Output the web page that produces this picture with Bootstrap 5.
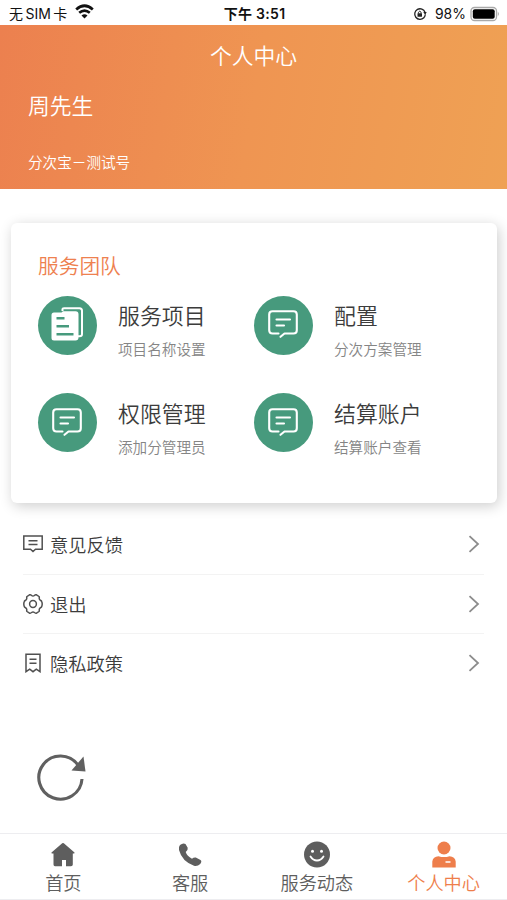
<!DOCTYPE html>
<html lang="zh-CN">
<head>
<meta charset="utf-8">
<meta name="viewport" content="width=device-width, initial-scale=1">
<title>个人中心</title>
<link href="https://cdn.jsdelivr.net/npm/bootstrap@5.3.0/dist/css/bootstrap.min.css" rel="stylesheet">
<style>
  body { font-family: "Noto Sans CJK SC", sans-serif; font-weight: 350; color: #3c3c3c; background: #fff; }
  svg { display: block; flex: none; }
  .screen { height: 900px; }
  .status { height: 25px; font-family: Inter, "Noto Sans CJK SC", sans-serif; font-size: 14px; font-weight: 400; line-height: 23px; color: #111; padding: 2px 7px 0 9px; }
  .clock { letter-spacing: .3px; }
  .carrier { word-spacing: -1.500px; }
  .hero { height: 164px; background: linear-gradient(100deg, #ec804f 0%, #ef9552 50%, #efa154 100%); padding: 15px 28px 0; }
  .hero-title { font-size: 21.8px; line-height: 30px; }
  .hero-name { font-size: 21.8px; line-height: 30px; margin-top: 20px; }
  .hero-org { font-size: 14.6px; line-height: 20px; margin-top: 32px; }
  .team { height: 280px; margin: 34px 10px 0 11px; padding: 27px 0 0 27px; border-radius: 6px; box-shadow: 2px 3px 14px rgba(0,0,0,.2); }
  .team-title { font-size: 20.7px; line-height: 30px; color: #ee8150; margin-bottom: 15.500px; }
  .tile { width: 216px; height: 97.600px; }
  .disc { width: 59px; height: 59px; background: #479a7d; margin-right: 21px; flex: none; }
  .disc svg { margin-bottom: 2px; }
  .disc .bubble { margin-right: 1px; }
  .tile-name { font-size: 21.9px; line-height: 30px; margin-top: 4.500px; }
  .tile-note { font-size: 14.6px; line-height: 20px; margin-top: 9px; color: #858585; }
  .menu { margin: 12px 23px 0; }
  .menu-row { height: 60px; padding-bottom: 1px; font-size: 18.3px; line-height: 28px; border-bottom: 1px solid #f3f3f3; }
  .menu-row + .menu-row { height: 59px; padding-bottom: 0; }
  .menu-row:last-child { border-bottom: 0; padding-bottom: 2px !important; }
  .menu-row svg:first-child { margin-right: 7px; }
  .reload { margin: 55.500px 0 0 36px; }
  .tabs { height: 67px; border-top: 1px solid #ededf0; border-bottom: 1px solid #ededf0; font-size: 18.2px; line-height: 26px; color: #5e5e5e; padding-top: 7px; }
  .tabs .on { color: #ee7e4b; }
</style>
<script src="https://cdn.jsdelivr.net/npm/bootstrap@5.3.0/dist/js/bootstrap.bundle.min.js"></script>
</head>
<body>
<svg width="0" height="0" class="position-absolute">
  <symbol id="bubble" viewBox="0 0 30 28">
    <path d="M10.500 23.500H4.500Q1.200 23.500 1.200 20.200V4.500Q1.200 1.200 4.500 1.200H25.500Q28.800 1.200 28.800 4.500V20.200Q28.800 23.500 25.500 23.500H16.500L12.500 26.800M8.500 9.500H22M8.500 15.500H16" fill="none" stroke="#fff" stroke-width="2.100" stroke-linecap="round" stroke-linejoin="round"/>
  </symbol>
  <symbol id="arrow" viewBox="0 0 12 18"><path d="M1.500 1.200L10 9L1.500 16.800" fill="none" stroke="#8c8c8c" stroke-width="1.800"/></symbol>
</svg>

<div class="screen d-flex flex-column overflow-hidden">
  <div class="status row g-0 align-items-center">
    <div class="col d-flex align-items-center">
      <span class="carrier">无 SIM 卡</span>
      <svg class="ms-2 mb-1" width="19" height="15" viewBox="0 0 19 15" fill="none" stroke="#111" stroke-width="2.700">
        <path d="M1.200 5.500Q9.500 -2 17.800 5.500M4.200 8.800Q9.500 4.300 14.800 8.800"/><path d="M6.500 11.400Q9.500 9 12.500 11.400L9.500 14.400Z" fill="#111" stroke="none"/>
      </svg>
    </div>
    <div class="clock col-auto fw-semibold">下午 3:51</div>
    <div class="col d-flex align-items-center justify-content-end">
      <svg width="14" height="14" viewBox="0 0 14 14" fill="none" stroke="#222">
        <path d="M10.800 10.800A5.300 5.300 0 1 1 12 5.200" stroke-width="1.300"/><path d="M12.300 7.500A5.300 5.300 0 0 1 10.500 11" stroke-width="1.300"/><path d="M10.300 5H13.700L12.200 8Z" fill="#222" stroke="none"/>
        <rect x="4.500" y="6.200" width="4.500" height="3.600" rx=".5" fill="#222" stroke="none"/><path d="M5.400 6.500V5.300Q6.750 3 8.100 5.300V6.500"/>
      </svg>
      <span class="mx-1 ps-1">98%</span>
      <svg width="30" height="16" viewBox="0 0 30 16">
        <rect x="1" y="1.500" width="25.500" height="13" rx="3.500" fill="#fff" stroke="#a9a9a9" stroke-width="1.300"/><rect x="2.800" y="3.200" width="21.900" height="9.600" rx="2" fill="#000"/><path d="M27.800 5.800Q30 8 27.800 10.200Z" fill="#a9a9a9"/>
      </svg>
    </div>
  </div>

  <header class="hero text-white">
    <div class="hero-title text-center">个人中心</div>
    <div class="hero-name">周先生</div>
    <div class="hero-org">分次宝－测试号</div>
  </header>

  <section class="team bg-white">
    <div class="team-title">服务团队</div>
    <div class="d-flex flex-wrap">
      <div class="tile d-flex">
        <div class="disc rounded-circle d-flex align-items-center justify-content-center">
          <svg width="33" height="34" viewBox="0 0 33 34"><path d="M11.500 4V2Q11.500 1.200 13 1.200H28.500Q31 1.200 31 3.700V27Q31 29.300 28.500 29.300H26" fill="none" stroke="#fff" stroke-width="2"/><path d="M3 5.500H10.500L12 4.300H24.500Q27.500 4.300 27.500 7.300V30.500Q27.500 33.500 24.500 33.500H3Q.5 33.500 .5 31V8Q.5 5.500 3 5.500Z" fill="#fff"/><path d="M5.500 11.300H13.500M5.500 19.200H18M5.500 27.200H22.500" stroke="#479a7d" stroke-width="2.500"/><path d="M29.200 4V27.500" stroke="#479a7d" stroke-width="1.200"/></svg>
        </div>
        <div><div class="tile-name">服务项目</div><div class="tile-note">项目名称设置</div></div>
      </div>
      <div class="tile d-flex">
        <div class="disc rounded-circle d-flex align-items-center justify-content-center"><svg class="bubble" width="30" height="28"><use href="#bubble"/></svg></div>
        <div><div class="tile-name">配置</div><div class="tile-note">分次方案管理</div></div>
      </div>
      <div class="tile d-flex">
        <div class="disc rounded-circle d-flex align-items-center justify-content-center"><svg class="bubble" width="30" height="28"><use href="#bubble"/></svg></div>
        <div><div class="tile-name">权限管理</div><div class="tile-note">添加分管理员</div></div>
      </div>
      <div class="tile d-flex">
        <div class="disc rounded-circle d-flex align-items-center justify-content-center"><svg class="bubble" width="30" height="28"><use href="#bubble"/></svg></div>
        <div><div class="tile-name">结算账户</div><div class="tile-note">结算账户查看</div></div>
      </div>
    </div>
  </section>

  <div class="menu">
    <div class="menu-row d-flex align-items-center">
      <svg width="20" height="20" viewBox="0 0 20 20" fill="none" stroke="#505050" stroke-width="1.500"><path d="M.8 2H19.200V15.300H12.500L10 17.600L7.500 15.300H.8ZM5.500 6.700H14.500M5.500 10.500H14.500"/></svg>
      <span>意见反馈</span><svg class="ms-auto me-1" width="12" height="18"><use href="#arrow"/></svg>
    </div>
    <div class="menu-row d-flex align-items-center">
      <svg width="20" height="20" viewBox="0 0 20 20" fill="none" stroke="#505050" stroke-width="1.500" stroke-linejoin="round"><path d="M6.500 .8Q8 .6 8.500 1.500Q10 2.500 11.500 1.500Q12 .6 13.500 .8L16 2.500Q16.500 3.300 16.200 4.200Q16.200 5.800 17.800 6.500Q18.600 7 18.800 7.800Q19.600 10 18.800 12.200Q18.600 13 17.800 13.500Q16.200 14.200 16.200 15.800Q16.500 16.700 16 17.500L13.500 19.200Q12 19.400 11.500 18.500Q10 17.500 8.500 18.500Q8 19.400 6.500 19.200L4 17.500Q3.500 16.700 3.800 15.800Q3.800 14.200 2.200 13.500Q1.400 13 1.200 12.200Q.4 10 1.200 7.800Q1.400 7 2.200 6.500Q3.800 5.800 3.800 4.200Q3.500 3.300 4 2.500Z"/><circle cx="10" cy="10" r="3.400"/></svg>
      <span>退出</span><svg class="ms-auto me-1" width="12" height="18"><use href="#arrow"/></svg>
    </div>
    <div class="menu-row d-flex align-items-center">
      <svg width="20" height="20" viewBox="0 0 20 20" fill="none" stroke="#505050" stroke-width="1.500"><path d="M3 1.200H17V18.700L13.300 16.200L10 18.700L6.700 16.200L3 18.700ZM6.500 6.200H13.500M6.500 10.200H13.500"/></svg>
      <span>隐私政策</span><svg class="ms-auto me-1" width="12" height="18"><use href="#arrow"/></svg>
    </div>
  </div>

  <div class="reload">
    <svg width="52" height="54" viewBox="0 0 52 54"><path d="M42 16A21.600 21.600 0 1 0 46 30" fill="none" stroke="#606060" stroke-width="3.100"/><path d="M47.500 7.500L49.500 22.500L35.500 21.500Z" fill="#606060"/></svg>
  </div>

  <nav class="tabs mt-auto row g-0 text-center">
    <div class="col d-flex flex-column align-items-center">
      <svg width="26" height="28" viewBox="0 0 26 28" fill="currentColor"><path d="M12.200 2.300Q13 1.600 13.800 2.300L24.500 11.500Q25 12.500 23.800 12.600H22.800V23.500Q22.800 25.300 21 25.300H16V19H12V25.300H5Q3.500 25.300 3.500 23.500V12.600H2.200Q1 12.500 1.500 11.500Z"/></svg>
      <div>首页</div>
    </div>
    <div class="col d-flex flex-column align-items-center">
      <svg width="26" height="28" viewBox="0 0 26 28" fill="currentColor"><path d="M3 4Q6 1.500 8.500 2.900L10.700 6.700Q11.200 9.300 8.700 11Q10 15 15 17.800Q16.500 16.200 18.800 16.500L23.500 18.900Q25.300 20.300 23.200 23Q20.500 25.500 17 24.700Q5 20.500 2 9Q1.300 6 3 4Z"/></svg>
      <div>客服</div>
    </div>
    <div class="col d-flex flex-column align-items-center">
      <svg width="28" height="28" viewBox="0 0 28 28"><circle cx="14" cy="13.500" r="13" fill="currentColor"/><circle cx="9.500" cy="10.300" r="1.500" fill="#fff"/><circle cx="18.500" cy="10.300" r="1.500" fill="#fff"/><path d="M7.500 15.500Q10 19.500 14 19.500T20.500 15.500" fill="none" stroke="#fff" stroke-width="1.800" stroke-linecap="round"/></svg>
      <div>服务动态</div>
    </div>
    <div class="col on d-flex flex-column align-items-center">
      <svg width="26" height="28" viewBox="0 0 26 28" fill="currentColor"><circle cx="13" cy="7" r="6.500"/><path d="M1.300 26.500V20.500Q2 15.500 7.500 15.200Q13 17 18.500 15.200Q24 15.500 24.700 20.500V26.500Z"/><path d="M14.500 21H19.500" stroke="#fff" stroke-width="1.500"/></svg>
      <div>个人中心</div>
    </div>
  </nav>
</div>
</body>
</html>
